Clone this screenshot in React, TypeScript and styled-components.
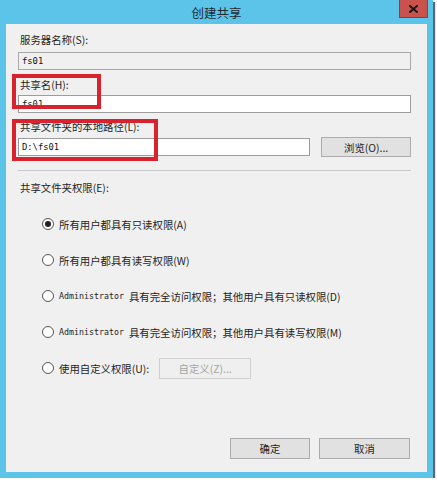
import React from "react";
import styled, { createGlobalStyle } from "styled-components";

const GlobalStyle = createGlobalStyle`
  html, body { margin: 0; padding: 0; background: #ffffff; }
  body { font-family: "Noto Sans CJK SC", "Noto Sans", sans-serif; }
`;

const CJK = `"Noto Sans CJK SC", "Noto Sans", sans-serif`;
const MONO = `"DejaVu Sans Mono", "Liberation Mono", "Noto Sans CJK SC", monospace`;

const Frame = styled.div`
  width: 433px;
  height: 478px;
  box-sizing: border-box;
  background: #5cc4e9;
  padding: 0 6px 6px 6px;
  display: flex;
  flex-direction: column;
  box-shadow: 2px 2px 1px rgba(40, 50, 60, 0.75);
`;

const TitleBar = styled.div`
  height: 24px;
  display: grid;
  grid-template-columns: 29px 1fr 29px;
  align-items: start;
`;

const Title = styled.div`
  grid-column: 2;
  text-align: center;
  font-family: ${CJK};
  font-size: 12.5px;
  line-height: 26px;
  color: #1f2a33;
`;

const CloseButton = styled.div`
  grid-column: 3;
  width: 29px;
  height: 18px;
  box-sizing: border-box;
  background: #c9524c;
  border: 1px solid #9a3a35;
  border-top: none;
  display: flex;
  align-items: center;
  justify-content: center;
  margin-left: 1px;
`;

const Client = styled.div`
  position: relative;
  flex: 1;
  background: #f0f0f0;
  padding: 8px 16px 13px 12px;
  display: flex;
  flex-direction: column;
  font-family: ${CJK};
  font-size: 10.4px;
  color: #1e1e1e;
`;

const Label = styled.div<{ $mb?: number; $mt?: number }>`
  height: 16px;
  line-height: 16px;
  padding-left: 2px;
  margin-top: ${(p) => p.$mt ?? 0}px;
  margin-bottom: ${(p) => p.$mb ?? 3}px;
  white-space: nowrap;
`;

const TextBox = styled.div<{ $readonly?: boolean; $width?: number }>`
  height: 18px;
  box-sizing: border-box;
  width: ${(p) => (p.$width ? `${p.$width}px` : "100%")};
  border: 1px solid ${(p) => (p.$readonly ? "#a9a9a9" : "#9d9d9d")};
  background: ${(p) => (p.$readonly ? "#f0f0f0" : "#ffffff")};
  font-family: ${MONO};
  font-size: 8.8px;
  line-height: 16px;
  padding-left: 3px;
  color: #111;
`;

const Row = styled.div<{ $mt?: number }>`
  display: flex;
  align-items: center;
  margin-top: ${(p) => p.$mt ?? 0}px;
`;

const Button = styled.div<{ $width: number; $height?: number; $disabled?: boolean }>`
  width: ${(p) => p.$width}px;
  height: ${(p) => p.$height ?? 21}px;
  box-sizing: border-box;
  border: 1px solid ${(p) => (p.$disabled ? "#cfcfcf" : "#acacac")};
  background: ${(p) => (p.$disabled ? "#efefef" : "#e1e1e1")};
  color: ${(p) => (p.$disabled ? "#a3a3a3" : "#1e1e1e")};
  display: flex;
  align-items: center;
  justify-content: center;
  font-family: ${CJK};
  font-size: 10.4px;
  white-space: nowrap;
`;

const Separator = styled.div`
  height: 1px;
  background: #c9c9c9;
  margin-top: 13px;
  width: 393px;
`;

const RadioGroup = styled.div`
  display: flex;
  flex-direction: column;
  gap: 20px;
  padding-left: 24px;
  margin-top: 17px;
`;

const RadioRow = styled.div`
  display: flex;
  align-items: center;
  height: 16px;
  white-space: nowrap;
`;

const RadioCircle = styled.span<{ $checked?: boolean }>`
  width: 12px;
  height: 12px;
  box-sizing: border-box;
  border-radius: 50%;
  border: 1px solid #555;
  background: #fff;
  display: inline-flex;
  align-items: center;
  justify-content: center;
  margin-right: 5px;
  &::after {
    content: "";
    width: 6px;
    height: 6px;
    border-radius: 50%;
    background: ${(p) => (p.$checked ? "#222" : "transparent")};
  }
`;

const Latin = styled.span`
  font-family: ${MONO};
  font-size: 8.3px;
  margin-right: 5px;
`;

const Footer = styled.div`
  margin-top: auto;
  display: flex;
  justify-content: flex-end;
  gap: 9px;
  padding-right: 1px;
`;

const Highlight = styled.div<{ $x: number; $y: number; $w: number; $h: number }>`
  position: absolute;
  left: ${(p) => p.$x}px;
  top: ${(p) => p.$y}px;
  width: ${(p) => p.$w}px;
  height: ${(p) => p.$h}px;
  box-sizing: border-box;
  border: 4px solid #d8222e;
  pointer-events: none;
`;

const radios: { latin?: string; text: string; checked?: boolean }[] = [
  { text: "所有用户都具有只读权限(A)", checked: true },
  { text: "所有用户都具有读写权限(W)" },
  { latin: "Administrator", text: "具有完全访问权限；其他用户具有只读权限(D)" },
  { latin: "Administrator", text: "具有完全访问权限；其他用户具有读写权限(M)" },
];

export default function App() {
  return (
    <>
      <GlobalStyle />
      <Frame>
        <TitleBar>
          <Title>创建共享</Title>
          <CloseButton>
            <svg width="9" height="8" viewBox="0 0 9 8">
              <path d="M1 1 L8 7 M8 1 L1 7" stroke="#1a1a1a" strokeWidth="2" strokeLinecap="square" />
            </svg>
          </CloseButton>
        </TitleBar>
        <Client>
          <Label $mb={4}>服务器名称(S):</Label>
          <TextBox $readonly>fs01</TextBox>
          <Label $mt={7} $mb={2}>共享名(H):</Label>
          <TextBox>fs01</TextBox>
          <Label $mt={6} $mb={2}>共享文件夹的本地路径(L):</Label>
          <Row>
            <TextBox $width={293}>D:\fs01</TextBox>
            <Button $width={90} $height={20} style={{ marginLeft: 11 }}>
              浏览(O)...
            </Button>
          </Row>
          <Separator />
          <Label $mt={9}>共享文件夹权限(E):</Label>
          <RadioGroup>
            {radios.map((r, i) => (
              <RadioRow key={i}>
                <RadioCircle $checked={r.checked} />
                {r.latin && <Latin>{r.latin}</Latin>}
                {r.text}
              </RadioRow>
            ))}
            <RadioRow>
              <RadioCircle />
              使用自定义权限(U):
              <Button $width={92} $disabled style={{ marginLeft: 10 }}>
                自定义(Z)...
              </Button>
            </RadioRow>
          </RadioGroup>
          <Footer>
            <Button $width={80}>确定</Button>
            <Button $width={91}>取消</Button>
          </Footer>
          <Highlight $x={6} $y={50} $w={89} $h={35} />
          <Highlight $x={6} $y={95} $w={146} $h={42} />
        </Client>
      </Frame>
    </>
  );
}
